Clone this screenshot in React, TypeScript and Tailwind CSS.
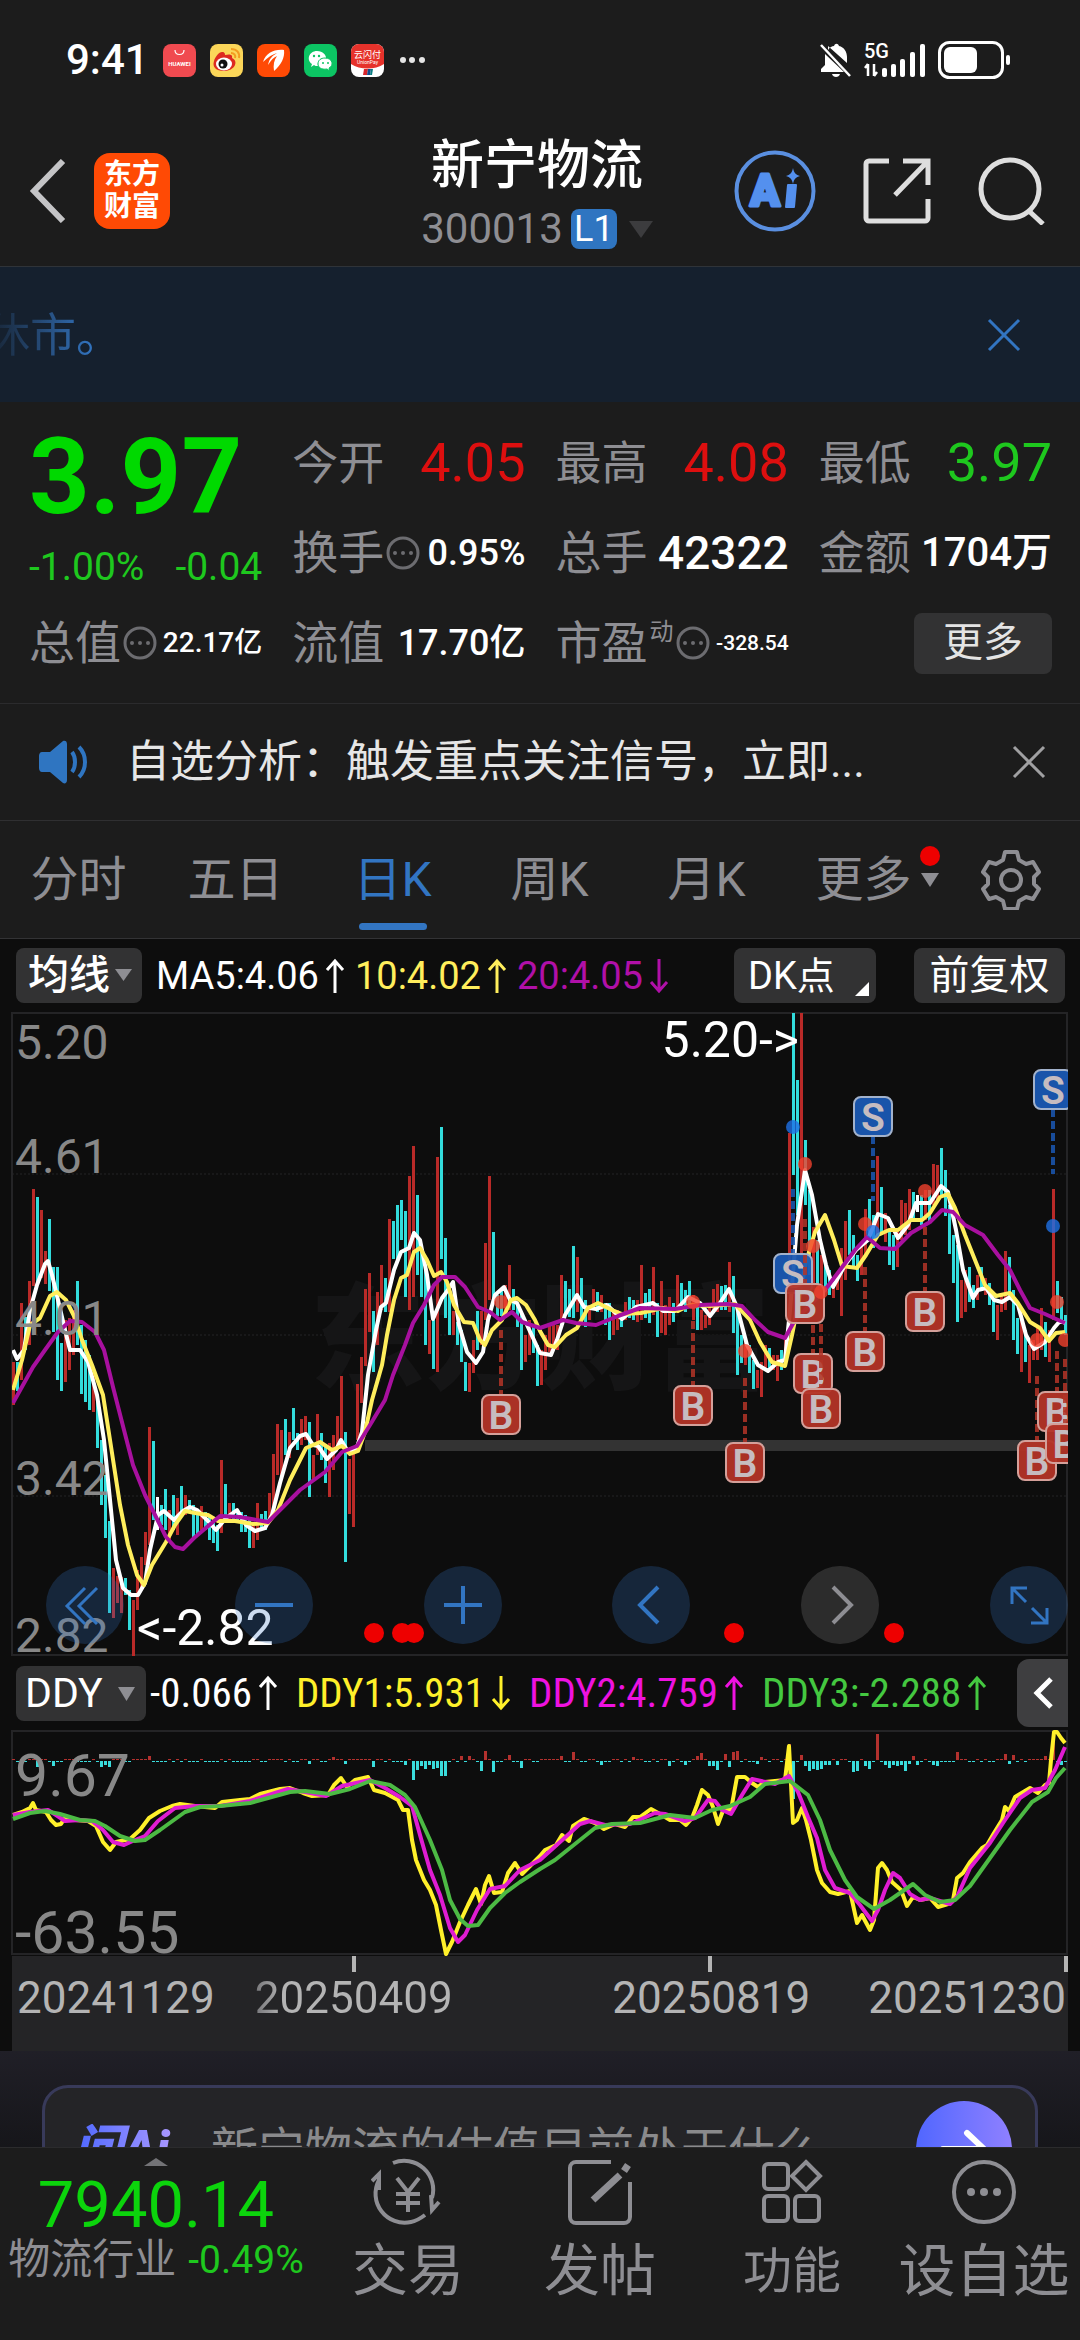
import React, { useState } from "react";

type Point = [number, number];

// One entry per trading day: colour (r = up, c = down, w = flat), high y, low y
const CANDLES = `
r1362-1405 c1362-1391 r1303-1380 c1317-1350 r1281-1345 r1189-1286 c1197-1284 r1210-1278 r1251-1284 c1219-1291
c1267-1332 c1267-1380 c1343-1391 r1320-1382 r1318-1370 r1310-1355 c1281-1345 c1325-1394 c1340-1402 c1355-1410
r1372-1412 c1400-1448 c1440-1505 c1475-1538 c1521-1613 r1568-1618 r1576-1603 r1577-1613 c1578-1595 c1590-1630
r1600-1656 r1570-1610 r1557-1590 r1532-1565 r1427-1545 c1441-1520 w1497-1530 c1505-1525 c1489-1530 r1510-1540
c1495-1530 r1498-1535 c1486-1515 r1495-1515 c1500-1512 c1505-1538 c1510-1535 r1506-1530 c1512-1530 c1515-1540
c1520-1543 c1525-1551 r1460-1533 c1484-1520 r1503-1523 c1503-1520 c1510-1523 c1512-1532 c1515-1532 c1520-1548
r1525-1548 r1503-1540 c1514-1530 c1511-1530 r1493-1522 r1454-1510 r1424-1475 r1430-1478 c1419-1455 r1432-1458
c1408-1440 c1433-1450 r1419-1445 r1416-1440 c1422-1497 r1455-1480 r1414-1455 c1433-1460 c1445-1483 r1443-1497
r1435-1470 r1416-1450 r1376-1440 c1432-1562 r1459-1514 r1450-1527 r1384-1440 r1357-1403 r1289-1366 r1273-1332
c1311-1372 r1292-1345 r1265-1310 c1278-1312 r1219-1312 c1221-1259 c1205-1260 c1200-1240 c1211-1297 r1176-1310
r1146-1297 c1195-1275 c1245-1297 c1270-1345 r1320-1354 c1320-1369 r1157-1372 c1127-1259 c1238-1318 c1290-1335
r1311-1335 c1322-1345 c1330-1362 c1362-1391 r1363-1392 r1340-1373 c1311-1350 r1311-1345 r1243-1320 r1176-1300
c1232-1300 c1295-1316 c1290-1316 r1285-1310 r1265-1310 c1289-1310 c1305-1327 c1312-1370 r1335-1362 r1320-1355
c1325-1353 c1345-1386 r1350-1385 r1335-1370 r1325-1352 r1325-1350 r1325-1350 r1275-1320 c1281-1315 c1289-1317
c1246-1318 r1257-1312 c1278-1325 c1300-1327 r1305-1320 r1289-1310 c1292-1312 r1295-1312 c1303-1325 c1303-1340
r1310-1335 r1310-1330 c1312-1327 r1302-1320 c1297-1318 c1300-1320 r1300-1322 r1265-1320 c1293-1318 c1289-1323
r1267-1315 c1303-1337 r1281-1333 r1305-1335 r1297-1325 c1303-1322 r1275-1310 c1283-1305 c1290-1312 c1281-1305
r1295-1320 c1305-1330 r1310-1330 r1315-1328 r1305-1325 r1289-1310 r1284-1312 c1286-1310 c1285-1310 r1262-1312
c1276-1333 c1310-1375 c1335-1363 r1340-1365 c1345-1373 c1360-1389 r1370-1388 r1362-1397 r1345-1370 c1348-1370
r1355-1370 r1355-1381 c1350-1370 r1340-1362 r1133-1280 c1013-1175 c1080-1215 r1013-1256 c1140-1205 c1190-1275
r1227-1290 c1240-1290 r1255-1300 c1262-1290 c1270-1295 r1285-1298 r1275-1290 r1248-1316 r1221-1280 c1210-1255
c1235-1268 c1255-1281 r1245-1275 r1209-1255 c1199-1240 c1215-1248 r1156-1235 c1187-1235 r1213-1242 c1230-1265
c1235-1270 r1230-1267 r1200-1240 r1203-1235 r1189-1230 c1192-1222 w1195-1212 c1195-1225 r1190-1220 c1190-1222
r1164-1205 r1165-1200 c1148-1195 c1170-1216 c1205-1254 c1235-1283 c1245-1322 r1280-1318 r1270-1312 c1267-1302
c1285-1308 r1275-1300 c1267-1290 r1278-1295 c1283-1305 c1300-1332 r1305-1340 r1295-1312 r1251-1310 c1257-1300
c1290-1340 c1318-1354 r1320-1372 c1330-1362 r1345-1383 r1340-1360 r1325-1360 r1308-1350 c1322-1357 r1330-1362
r1189-1320 c1281-1313 c1297-1320 c1315-1335`
  .trim()
  .split(/\s+/)
  .map((item, i) => {
    const [high, low] = item.slice(1).split("-").map(Number);
    return { x: 13 + i * 4, kind: item[0], high, low };
  });

const MA5 =
  "13,1350 17,1359 24,1350 30,1310 37,1285 45,1264 48,1261 52,1275 58,1300 65,1330 70,1350 80,1350 88,1362 97,1395 104,1440 110,1500 116,1560 123,1588 131,1595 138,1595 145,1583 150,1550 158,1515 164,1511 174,1520 183,1511 190,1507 197,1510 207,1520 216,1530 226,1518 237,1510 246,1525 255,1531 265,1528 272,1515 280,1483 290,1448 300,1436 306,1434 313,1445 318,1446 327,1459 336,1450 341,1440 347,1450 356,1450 362,1432 368,1375 376,1330 381,1307 386,1303 394,1270 401,1252 409,1248 414,1233 420,1240 427,1275 433,1319 442,1298 448,1290 453,1282 459,1325 467,1352 476,1363 483,1352 488,1320 495,1295 504,1287 510,1300 517,1303 527,1325 540,1353 551,1355 557,1340 565,1315 577,1295 584,1307 596,1309 607,1305 622,1319 636,1307 653,1303 663,1311 675,1311 688,1297 700,1303 710,1316 720,1303 729,1289 737,1307 747,1345 758,1365 768,1371 778,1362 785,1360 790,1310 797,1225 805,1170 812,1195 820,1240 826,1265 833,1287 845,1265 856,1250 868,1240 878,1214 888,1218 898,1238 908,1225 916,1203 930,1203 941,1186 948,1192 956,1230 963,1270 973,1298 978,1290 986,1288 994,1300 1002,1302 1010,1297 1018,1305 1026,1335 1034,1349 1045,1342 1054,1328 1060,1321 1065,1323";
const MA10 =
  "13,1390 22,1360 30,1325 40,1318 50,1296 57,1292 66,1300 75,1318 82,1340 92,1365 103,1395 110,1440 120,1505 128,1545 137,1575 144,1585 152,1565 166,1542 175,1525 185,1511 195,1513 208,1515 218,1521 235,1521 253,1524 268,1523 278,1510 290,1480 306,1448 320,1442 332,1450 342,1446 350,1454 358,1451 365,1432 372,1400 382,1365 387,1335 394,1300 401,1278 407,1275 414,1252 420,1248 427,1260 434,1276 441,1272 447,1282 454,1305 464,1322 473,1323 480,1340 485,1345 492,1330 502,1320 511,1300 517,1298 526,1305 535,1320 540,1331 548,1345 555,1347 566,1335 577,1328 588,1308 598,1303 612,1310 622,1314 641,1313 663,1308 678,1311 690,1305 710,1306 735,1304 750,1320 760,1342 772,1362 785,1366 792,1335 799,1300 806,1262 815,1232 825,1215 834,1240 842,1266 857,1268 866,1255 878,1235 889,1230 898,1230 911,1220 922,1220 930,1213 940,1197 948,1194 955,1208 965,1235 975,1260 985,1285 996,1296 1010,1293 1018,1303 1030,1322 1040,1328 1049,1341 1056,1333 1065,1332";
const MA20 =
  "13,1403 23,1385 33,1367 45,1350 58,1332 70,1321 82,1322 95,1332 104,1350 113,1387 124,1430 133,1465 145,1495 155,1515 166,1537 175,1547 183,1549 194,1538 207,1527 220,1516 240,1517 268,1522 282,1508 300,1490 325,1472 342,1452 357,1446 370,1425 385,1400 393,1375 405,1345 413,1323 424,1305 434,1285 442,1277 455,1277 465,1287 478,1307 490,1312 500,1320 512,1312 522,1322 540,1328 563,1320 576,1323 596,1325 618,1316 640,1308 675,1309 700,1305 728,1304 742,1306 755,1320 768,1332 785,1338 795,1320 810,1305 825,1290 840,1270 855,1250 867,1237 880,1248 895,1249 911,1233 930,1222 942,1210 953,1212 965,1225 983,1235 998,1255 1010,1270 1020,1290 1030,1308 1045,1314 1056,1319 1065,1323";

const DDY1 =
  "13,1815 22,1812 30,1808 33,1803 36,1810 46,1812 51,1820 56,1825 61,1824 64,1819 75,1820 88,1821 96,1826 103,1842 110,1850 116,1842 130,1839 140,1830 149,1818 160,1811 172,1806 180,1804 195,1806 215,1808 222,1802 240,1800 250,1799 260,1794 280,1789 290,1788 303,1793 312,1796 328,1795 334,1785 341,1778 347,1787 355,1780 368,1777 374,1790 385,1793 398,1800 403,1810 408,1810 412,1840 416,1860 424,1880 430,1890 436,1905 441,1930 446,1954 452,1942 460,1922 468,1905 476,1889 481,1904 485,1885 489,1876 494,1893 502,1892 508,1873 515,1863 522,1874 530,1866 540,1856 545,1850 556,1845 562,1835 569,1841 573,1826 584,1819 595,1823 604,1829 615,1824 625,1827 633,1817 640,1817 651,1809 660,1814 670,1820 680,1820 686,1825 692,1818 697,1805 702,1790 708,1795 713,1807 718,1824 724,1808 731,1810 737,1777 745,1777 752,1783 758,1787 765,1782 785,1780 789,1746 793,1823 797,1820 802,1808 806,1820 811,1840 817,1870 822,1883 830,1892 838,1894 850,1891 857,1923 862,1915 870,1930 874,1920 878,1868 882,1863 887,1870 892,1882 901,1890 907,1906 913,1897 920,1900 930,1898 938,1907 948,1904 953,1900 957,1878 963,1873 970,1862 982,1848 987,1845 994,1833 1002,1820 1005,1807 1009,1811 1015,1797 1030,1788 1038,1793 1045,1785 1049,1783 1051,1760 1054,1732 1057,1732 1061,1738 1065,1743";
const DDY2 =
  "13,1815 30,1812 48,1810 56,1815 65,1821 80,1820 92,1821 103,1830 113,1842 124,1845 135,1840 145,1836 158,1821 175,1808 195,1806 220,1806 250,1801 275,1793 288,1789 305,1792 326,1796 342,1786 370,1780 385,1788 400,1797 412,1806 420,1835 430,1870 440,1895 450,1928 458,1942 465,1935 477,1910 490,1889 505,1886 520,1870 540,1860 560,1842 580,1824 590,1821 605,1825 630,1824 655,1813 665,1814 685,1821 695,1818 708,1800 715,1801 722,1810 731,1814 742,1795 752,1779 775,1784 789,1776 798,1792 808,1817 817,1838 825,1870 835,1888 850,1893 860,1905 872,1921 878,1910 885,1890 893,1873 900,1878 910,1894 920,1900 930,1898 950,1904 957,1897 970,1868 990,1843 1005,1820 1020,1798 1032,1790 1045,1788 1055,1770 1065,1747";
const DDY3 =
  "13,1819 30,1813 45,1811 60,1814 80,1820 95,1821 105,1826 120,1836 135,1841 145,1840 160,1830 185,1812 200,1807 220,1806 250,1803 290,1792 305,1791 330,1794 350,1789 370,1781 390,1785 405,1795 415,1807 430,1840 442,1870 450,1900 460,1919 468,1926 478,1925 490,1908 505,1893 520,1882 540,1869 555,1860 575,1844 595,1828 612,1824 640,1823 670,1815 695,1818 712,1810 730,1806 750,1797 765,1784 790,1781 808,1795 820,1820 830,1850 845,1880 857,1897 874,1909 890,1900 913,1884 925,1895 940,1902 955,1900 970,1886 985,1865 1010,1830 1032,1802 1048,1792 1056,1778 1065,1768";

// Days whose DDY bar is taller than the flat line, keyed by x
const BARS: Record<number, number> = {
  37: -6, 53: -5, 101: -6, 105: -4, 109: -6, 149: 4, 309: -3, 333: 3, 345: -3, 373: -6, 405: -4, 413: -19, 417: -9,
  421: -5, 425: -8, 429: -4, 433: -8, 437: -7, 441: -15, 445: -15, 461: 4, 469: 4, 481: -10, 485: 9, 493: -11, 509: 5,
  521: -7, 561: 4, 573: 8, 601: -4, 633: 3, 669: -5, 685: -4, 697: 4, 701: 7, 709: -5, 713: -5, 717: -9, 725: 6,
  729: -6, 733: 8, 737: 9, 757: -3, 761: 3, 789: 16, 793: -38, 801: 5, 805: -5, 809: -10, 813: -8, 817: -9, 821: -8,
  825: -4, 829: -4, 837: -4, 853: -11, 857: -10, 865: -5, 869: -8, 877: 26, 885: -4, 889: -7, 893: -4, 897: -5,
  901: -4, 905: -10, 909: -3, 913: 4, 917: -4, 933: -4, 937: -5, 957: 8, 1005: 6, 1009: -3, 1013: 5, 1045: 4,
  1053: 20, 1061: -4,
};

// Buy / sell signals: x, badge centre, dot on the curve, dashed line from / to
const SIGNALS = [
  { type: "B", x: 501, y: 1414, dot: 1302, from: 1330, to: 1394 },
  { type: "B", x: 693, y: 1405, dot: 1302, from: 1321, to: 1385 },
  { type: "B", x: 745, y: 1462, dot: 1351, from: 1378, to: 1442 },
  { type: "S", x: 793, y: 1273, dot: 1127, from: 1189, to: 1253 },
  { type: "B", x: 805, y: 1303, dot: 1164, from: 1219, to: 1283 },
  { type: "B", x: 813, y: 1373, dot: 1246, from: 1325, to: 1353 },
  { type: "B", x: 821, y: 1408, dot: 1292, from: 1324, to: 1388 },
  { type: "B", x: 865, y: 1351, dot: 1224, from: 1267, to: 1331 },
  { type: "S", x: 873, y: 1116, dot: 1232, from: 1136, to: 1201 },
  { type: "B", x: 925, y: 1311, dot: 1191, from: 1227, to: 1291 },
  { type: "B", x: 1037, y: 1460, dot: 1340, from: 1376, to: 1440 },
  { type: "S", x: 1053, y: 1089, dot: 1226, from: 1109, to: 1174 },
  { type: "B", x: 1057, y: 1411, dot: 1302, from: 1351, to: 1391 },
  { type: "B", x: 1065, y: 1443, dot: 1340, from: 1359, to: 1423 },
];

const EVENT_DOTS: Point[] = [
  [374, 1633],
  [402, 1633],
  [414, 1633],
  [734, 1633],
  [894, 1633],
];

const CANDLE_COLORS: Record<string, string> = { r: "#b92a28", c: "#32dcdc", w: "#ffffff" };

const TABS = ["分时", "五日", "日K", "周K", "月K", "更多"];

const Triangle = ({ className }: { className: string }) => (
  <svg viewBox="0 0 18 14" className={className} fill="currentColor" preserveAspectRatio="none">
    <path d="M0 0h18L9 14z" />
  </svg>
);

const Arrow = ({ down = false }: { down?: boolean }) => (
  <svg viewBox="0 0 20 36" className="w-5 h-9 shrink-0" fill="none" stroke="currentColor" strokeWidth="3">
    {down ? <path d="M10 1v32M2 24l8 9 8-9" /> : <path d="M10 35V3M2 12l8-9 8 9" />}
  </svg>
);

const Close = ({ className }: { className: string }) => (
  <svg viewBox="0 0 34 34" className={className} fill="none" stroke="currentColor" strokeWidth="3">
    <path d="M2 2l30 30M32 2L2 32" />
  </svg>
);

const MoreDots = () => (
  <svg viewBox="0 0 34 34" className="w-[34px] h-[34px] shrink-0 text-[#6c6c70]">
    <circle cx="17" cy="17" r="15" fill="none" stroke="currentColor" strokeWidth="3" />
    <g fill="currentColor">
      <circle cx="9" cy="17" r="2" />
      <circle cx="17" cy="17" r="2" />
      <circle cx="25" cy="17" r="2" />
    </g>
  </svg>
);

const StatusBar = () => (
  <div className="h-[120px] flex items-center justify-between pl-[66px] pr-[68px] text-white">
    <div className="flex items-center gap-[14px]">
      <span className="text-[42px] leading-none font-medium">9:41</span>
      <svg viewBox="0 0 33 33" className="w-[33px] h-[33px]">
        <rect width="33" height="33" rx="8" fill="#f04a50" />
        <path d="M12 6c0 6 9 6 9 0" fill="none" stroke="#fff" strokeWidth="1.2" />
        <text x="16.500" y="22" fontSize="6" fontWeight="700" textAnchor="middle" fill="#fff">
          HUAWEI
        </text>
      </svg>
      <svg viewBox="0 0 33 33" className="w-[33px] h-[33px]">
        <rect width="33" height="33" rx="8" fill="#fbd659" />
        <path d="M21 5c6 0 9 4 8 9M21 9c3 0 5 2 4 5" fill="none" stroke="#f39c1f" strokeWidth="2" />
        <path d="M12 8c3 0 3 2 3 3 4-1 8-1 7 3 7 3 3 13-8 13C6 27 2 23 4 17c1-4 5-9 8-9z" fill="#dd2a20" />
        <ellipse cx="14" cy="20" rx="8" ry="6.500" fill="#fff" />
        <circle cx="13" cy="20" r="4.500" fill="#111" />
        <circle cx="12" cy="21" r="1.500" fill="#fff" />
      </svg>
      <svg viewBox="0 0 33 33" className="w-[33px] h-[33px]">
        <rect width="33" height="33" rx="8" fill="#ff4a05" />
        <path d="M27 6C17 5 9 9 6 18c5-5 10-8 14-9-5 3-8 6-9 12 3-5 6-8 9-9-3 4-4 9-3 15 7-6 11-13 10-21z" fill="#fff" />
      </svg>
      <svg viewBox="0 0 33 33" className="w-[33px] h-[33px]">
        <rect width="33" height="33" rx="8" fill="#0cc463" />
        <path d="M13 7c6 0 9 4 9 7-6 0-9 3-8 8-2 0-3 0-4-1l-3 2 1-3c-6-4-3-13 5-13z" fill="#fff" />
        <path d="M21 14c8 0 9 8 4 10l1 3-3-2c-6 1-9-2-9-5 0-4 3-6 7-6z" fill="#fff" stroke="#0cc463" strokeWidth="1" />
        <g fill="#0cc463">
          <circle cx="10" cy="12" r="1.200" />
          <circle cx="15" cy="12" r="1.200" />
          <circle cx="19" cy="19" r="1" />
          <circle cx="24" cy="19" r="1" />
        </g>
      </svg>
      <svg viewBox="0 0 33 33" className="w-[33px] h-[33px]">
        <rect width="33" height="33" rx="8" fill="#fff" />
        <path d="M0 8a8 8 0 018-8h17a8 8 0 018 8v12c-9 6-24 6-33 0z" fill="#e6322b" />
        <text x="16.500" y="14" fontSize="9" textAnchor="middle" fill="#fff">
          云闪付
        </text>
        <text x="16.500" y="20" fontSize="5" textAnchor="middle" fill="#fff">
          UnionPay
        </text>
        <path d="M13 25h4l-1 6h-4z" fill="#d7262b" />
        <path d="M17 25h3l-1 6h-3z" fill="#124f8f" />
        <path d="M20 25h2l-1 6h-2z" fill="#0a7d80" />
      </svg>
      <svg viewBox="0 0 28 8" className="w-7 h-2" fill="#e5e5e5">
        <circle cx="5" cy="4" r="3" />
        <circle cx="14" cy="4" r="3" />
        <circle cx="24" cy="4" r="3" />
      </svg>
    </div>
    <div className="flex items-center gap-3">
      <svg viewBox="0 0 32 36" className="w-8 h-9" fill="#fff">
        <path d="M8 8c2-3 4-4 6-4 1-3 4-3 5 0 5 1 8 6 8 11v6L8 4zM5 12l19 18H1v-3l4-4z" />
        <path d="M12 32h8c-1 4-7 4-8 0z" />
        <path d="M1 3l29 31" stroke="#fff" strokeWidth="2.500" />
      </svg>
      <svg viewBox="0 0 62 38" className="w-[62px] h-[38px]" fill="#fff">
        <text x="0" y="17" fontSize="20" fontWeight="500">
          5G
        </text>
        <path d="M4 23v12M1 27l3-4M10 23v12M10 35l3-4" stroke="#fff" strokeWidth="2.500" fill="none" />
        <rect x="18" y="27" width="5" height="9" rx="2" />
        <rect x="27" y="23" width="5" height="13" rx="2" />
        <rect x="36" y="18" width="5" height="18" rx="2" />
        <rect x="46" y="11" width="5" height="25" rx="2" />
        <rect x="56" y="3" width="5" height="33" rx="2" />
      </svg>
      <svg viewBox="0 0 74 38" className="w-[74px] h-[38px]" fill="none">
        <rect x="1.500" y="1.500" width="63" height="35" rx="10" stroke="#fff" strokeWidth="3" />
        <rect x="6" y="6" width="33" height="26" rx="6" fill="#fff" />
        <rect x="68" y="14" width="4" height="10" rx="2" fill="#fff" />
      </svg>
    </div>
  </div>
);

const Header = () => (
  <header className="h-[147px] grid grid-cols-[1fr_auto_1fr] items-start pl-7 pr-[34px] border-b border-[#2f3338]">
    <div className="flex items-center h-[142px] gap-7">
      <button aria-label="返回">
        <svg viewBox="0 0 38 64" className="w-[38px] h-16" fill="none" stroke="#c4c4c6" strokeWidth="6">
          <path d="M35 2L6 32l29 30" />
        </svg>
      </button>
      <a
        href="#home"
        className="w-[76px] h-[76px] rounded-2xl bg-[#ff4a05] text-white text-[28px] leading-[32px] font-bold flex flex-col items-center justify-center"
      >
        <span>东方</span>
        <span>财富</span>
      </a>
    </div>
    <div className="pt-4 flex flex-col items-center gap-[10px]">
      <h1 className="text-[53px] leading-[60px] text-white font-medium">新宁物流</h1>
      <button className="flex items-center h-[46px] gap-2 text-[#8e8e93] text-[42px] leading-none">
        300013
        <span className="h-10 w-[46px] rounded-lg bg-[#2f75c1] text-white text-[36px] leading-10 text-center">L1</span>
        <Triangle className="w-6 h-[17px] ml-1 text-[#3c3c3e]" />
      </button>
    </div>
    <div className="flex items-center justify-end h-[142px] gap-[47px]">
      <button aria-label="AI" className="w-[82px] h-[82px]">
        <svg viewBox="0 0 82 82" className="w-full h-full">
          <circle cx="41" cy="41" r="38.500" fill="none" stroke="#5a8fe0" strokeWidth="4" />
          <text
            x="16"
            y="56"
            fontSize="44"
            fontWeight="900"
            fill="#5490ee"
            stroke="#5490ee"
            strokeWidth="3"
            strokeLinejoin="round"
          >
            A
          </text>
          <path d="M54 35h8l-2 22h-8z" fill="#5490ee" stroke="#5490ee" strokeWidth="2" strokeLinejoin="round" />
          <path d="M59 18c1 5 3 7 7 8-4 1-6 3-7 8-1-5-3-7-7-8 4-1 6-3 7-8z" fill="#5490ee" />
        </svg>
      </button>
      <button aria-label="分享">
        <svg viewBox="0 0 68 68" className="w-[68px] h-[68px]" fill="none" stroke="#dedede" strokeWidth="5">
          <path d="M26 4H6a3 3 0 00-3 3v54a3 3 0 003 3h56a3 3 0 003-3V42M40 4h25v24M64 5L32 38" />
        </svg>
      </button>
      <button aria-label="搜索">
        <svg viewBox="0 0 68 68" className="w-[68px] h-[68px]" fill="none" stroke="#dedede" strokeWidth="5">
          <circle cx="32" cy="32" r="29" />
          <path d="M51 54l14 13" />
        </svg>
      </button>
    </div>
  </header>
);

interface QuoteItemProps {
  label: string;
  value: string;
  valueClass: string;
  more?: boolean;
  sup?: string;
}

const QuoteItem: React.FC<QuoteItemProps> = ({ label, value, valueClass, more, sup }) => (
  <div className="h-[90px] flex items-center justify-between whitespace-nowrap leading-none">
    <div className="flex items-center gap-[2px]">
      <span className="text-[46px] text-[#8e8e93]">{label}</span>
      {sup && <span className="text-2xl leading-none text-[#8e8e93] self-start">{sup}</span>}
      {more && <MoreDots />}
    </div>
    <span className={valueClass}>{value}</span>
  </div>
);

const Quote = () => (
  <section className="grid grid-cols-4 gap-x-[30px] pl-[29px] pr-7 pt-4 pb-[15px] border-b border-[#2b2b2d]">
    <div className="row-span-2 whitespace-nowrap leading-none">
      <div className="h-[118px] flex items-center text-[106px] font-bold text-[#00d900]">3.97</div>
      <div className="h-[62px] flex items-center justify-between text-[39px] text-[#1ec81e]">
        <span>-1.00%</span>
        <span>-0.04</span>
      </div>
    </div>
    <QuoteItem label="今开" value="4.05" valueClass="text-[54px] text-[#dd0f0f]" />
    <QuoteItem label="最高" value="4.08" valueClass="text-[54px] text-[#dd0f0f]" />
    <QuoteItem label="最低" value="3.97" valueClass="text-[54px] text-[#1ec81e]" />
    <QuoteItem label="换手" value="0.95%" valueClass="text-4xl leading-none font-medium text-white" more />
    <QuoteItem label="总手" value="42322" valueClass="text-[46px] font-medium text-white" />
    <QuoteItem label="金额" value="1704万" valueClass="text-[40px] font-medium text-white" />
    <QuoteItem label="总值" value="22.17亿" valueClass="text-[28px] font-medium text-white" more />
    <QuoteItem label="流值" value="17.70亿" valueClass="text-4xl leading-none font-medium text-white" />
    <QuoteItem label="市盈" value="-328.54" valueClass="text-[21px] font-medium text-white" more sup="动" />
    <div className="flex items-center justify-end">
      <button className="w-[138px] h-[61px] rounded-lg bg-[#323233] text-[#e4e4e4] text-[40px] leading-none">更多</button>
    </div>
  </section>
);

const KLineChart = () => (
  <div className="relative">
    <svg viewBox="0 1012 1080 644" className="block w-full" role="img" aria-label="日K">
      <clipPath id="kline-plot">
        <rect x="12" y="1012" width="1056" height="644" />
      </clipPath>
      <g fill="none" stroke="#242426" strokeWidth="2">
        <path d="M12 1013h1055v642H12z" />
        <path d="M12 1174h1055M12 1335h1055M12 1496h1055" strokeDasharray="2 2" strokeWidth="1" />
      </g>
      <text x="310" y="1380" fontSize="115" fontWeight="900" fill="#151516">
        东方财富
      </text>
      <rect x="365" y="1440" width="703" height="11" fill="#333333" />
      <g clipPath="url(#kline-plot)">
        {CANDLES.map((c) => (
          <rect key={c.x} x={c.x - 1} y={c.high} width="3" height={c.low - c.high} fill={CANDLE_COLORS[c.kind]} />
        ))}
        <g fill="none" strokeWidth="4" strokeLinejoin="round">
          <polyline points={MA5} stroke="#ffffff" />
          <polyline points={MA10} stroke="#ffee5c" />
          <polyline points={MA20} stroke="#a8109f" />
        </g>
        {SIGNALS.map((s) => {
          const color = s.type === "B" ? "#b33427" : "#1a58b3";
          return (
            <g key={s.x}>
              <path d={`M${s.x} ${s.from}V${s.to}`} stroke={color} strokeWidth="4" strokeDasharray="8 4" opacity="0.85" />
              <circle cx={s.x} cy={s.dot} r="7" fill={s.type === "B" ? "#f0412d" : "#1e70e6"} opacity="0.8" />
              <rect
                x={s.x - 19}
                y={s.y - 19}
                width="38"
                height="39"
                rx="7"
                fill={color}
                fillOpacity="0.95"
                stroke={s.type === "B" ? "#d4a09a" : "#a2b2cc"}
                strokeWidth="2"
              />
              <text x={s.x} y={s.y + 15} fontSize="39" fontWeight="600" textAnchor="middle" fill="#c6bcc0">
                {s.type}
              </text>
            </g>
          );
        })}
      </g>
      <g fontSize="48" fill="#888888">
        <text x="15" y="1059">5.20</text>
        <text x="15" y="1173">4.61</text>
        <text x="15" y="1335">4.01</text>
        <text x="15" y="1495">3.42</text>
        <text x="15" y="1652">2.82</text>
      </g>
      <g fontSize="50" fill="#ffffff">
        <text x="799" y="1057" textAnchor="end">5.20-&gt;</text>
        <text x="137" y="1645">&lt;-2.82</text>
      </g>
      {EVENT_DOTS.map(([x, y]) => (
        <circle key={x} cx={x} cy={y} r="10" fill="#ee0000" />
      ))}
    </svg>
    <div className="absolute inset-x-0 bottom-3 pl-[46px] pr-3 flex justify-between text-[#3275c2]">
      <button aria-label="最早" className="w-[78px] h-[78px] rounded-full bg-[#3275c2]/25">
        <svg viewBox="0 0 78 78" fill="none" stroke="currentColor" strokeWidth="3">
          <path d="M39 22L21 40l18 18M51 22L33 40l18 18" />
        </svg>
      </button>
      <button aria-label="缩小" className="w-[78px] h-[78px] rounded-full bg-[#3275c2]/25">
        <svg viewBox="0 0 78 78" fill="none" stroke="currentColor" strokeWidth="4">
          <path d="M20 39h38" />
        </svg>
      </button>
      <button aria-label="放大" className="w-[78px] h-[78px] rounded-full bg-[#3275c2]/25">
        <svg viewBox="0 0 78 78" fill="none" stroke="currentColor" strokeWidth="4">
          <path d="M20 39h38M39 20v38" />
        </svg>
      </button>
      <button aria-label="左移" className="w-[78px] h-[78px] rounded-full bg-[#3275c2]/25">
        <svg viewBox="0 0 78 78" fill="none" stroke="currentColor" strokeWidth="4">
          <path d="M46 21L28 39l18 18" />
        </svg>
      </button>
      <button aria-label="右移" className="w-[78px] h-[78px] rounded-full bg-white/13 text-[#8e8e93]">
        <svg viewBox="0 0 78 78" fill="none" stroke="currentColor" strokeWidth="4">
          <path d="M32 21l18 18-18 18" />
        </svg>
      </button>
      <button aria-label="全屏" className="w-[78px] h-[78px] rounded-full bg-[#3275c2]/25">
        <svg viewBox="0 0 78 78" fill="none" stroke="currentColor" strokeWidth="3">
          <path d="M37 22H22v16M22 22l14 14M41 57h16V42M57 57L42 42" />
        </svg>
      </button>
    </div>
  </div>
);

const DdyChart = () => (
  <svg viewBox="0 1730 1080 226" className="block w-full" role="img" aria-label="DDY">
    <path d="M12 1731h1055v223H12z" fill="none" stroke="#242426" strokeWidth="2" />
    {CANDLES.map((c) => {
      const v = BARS[c.x] ?? (c.kind === "r" ? 1 : -1);
      return (
        <rect
          key={c.x}
          x={c.x - 1}
          y={v > 0 ? 1760 - v : 1761}
          width="3"
          height={Math.abs(v)}
          fill={v > 0 ? "#b3312e" : "#3adcdc"}
        />
      );
    })}
    <g fontSize="59" fill="#888888">
      <text x="15" y="1796">9.67</text>
      <text x="15" y="1953">-63.55</text>
    </g>
    <g fill="none" strokeWidth="4" strokeLinejoin="round">
      <polyline points={DDY1} stroke="#fff02a" />
      <polyline points={DDY2} stroke="#e01cd2" />
      <polyline points={DDY3} stroke="#4cba44" />
    </g>
  </svg>
);

const navItems = [
  {
    label: "交易",
    size: "text-[56px]",
    icon: (
      <>
        <path d="M22 7A29 29 0 0161 42M8 24a29 29 0 0032 42c6-1 10-4 14-7" />
        <path d="M1 25l7-7v16M68 46l-7 8-1-15" />
        <path d="M26 22l11 14 11-14M25 38h24M25 47h24M37 36v20" />
      </>
    ),
  },
  {
    label: "发帖",
    size: "text-[56px]",
    icon: (
      <>
        <path d="M48 6H13a6 6 0 00-6 6v49a6 6 0 006 6h48a6 6 0 006-6V26" />
        <path d="M65 9l-4 6M57 19L30 44" strokeWidth="7" />
      </>
    ),
  },
  {
    label: "功能",
    size: "text-[49px]",
    icon: (
      <>
        <rect x="9" y="8" width="24" height="25" rx="4" />
        <path d="M51 6l14 14-14 14-14-14z" />
        <rect x="9" y="40" width="24" height="25" rx="4" />
        <rect x="40" y="40" width="24" height="25" rx="4" />
      </>
    ),
  },
  {
    label: "设自选",
    size: "text-[57px]",
    icon: (
      <>
        <circle cx="37" cy="36" r="30" />
        <g fill="currentColor" stroke="none">
          <circle cx="24" cy="36" r="4" />
          <circle cx="37" cy="36" r="4" />
          <circle cx="50" cy="36" r="4" />
        </g>
      </>
    ),
  },
];

const BottomNav = () => (
  <nav className="h-[193px] shrink-0 flex bg-[#1c1c1c] border-t border-[#2b2b2d]">
    <button className="w-[312px] shrink-0 pt-[10px] flex flex-col items-center whitespace-nowrap">
      <Triangle className="w-6 h-2 rotate-180 text-[#737376]" />
      <span className="h-[78px] flex items-center text-[65px] leading-none text-[#0cd40c]">7940.14</span>
      <span className="h-8 flex items-center gap-3 text-[42px] leading-none text-[#8e8e93]">
        物流行业
        <span className="text-[39px] text-[#1ec81e]">-0.49%</span>
      </span>
    </button>
    {navItems.map((item) => (
      <button key={item.label} className="flex-1 pt-2 flex flex-col items-center text-[#8e8e93] whitespace-nowrap">
        <svg viewBox="0 0 74 74" className="w-[74px] h-[74px]" fill="none" stroke="currentColor" strokeWidth="4">
          {item.icon}
        </svg>
        <span className={`h-[82px] flex items-center leading-none ${item.size}`}>{item.label}</span>
      </button>
    ))}
  </nav>
);

const App: React.FC = () => {
  const [tab, setTab] = useState("日K");

  return (
    <div className="h-screen flex flex-col overflow-hidden bg-[#1c1c1c] font-['Roboto','Noto_Sans_CJK_SC',sans-serif]">
      <StatusBar />
      <Header />

      <main className="flex-1 min-h-0 overflow-hidden">
        {/* Scrolling market notice */}
        <div className="h-[135px] flex items-center justify-between pr-[59px] bg-[#15202e] text-[#3275c2] overflow-hidden">
          <p className="-ml-4 text-[46px] leading-none bg-linear-to-r from-[#15202e] to-[#3275c2] to-[110px] bg-clip-text text-transparent">
            休市。
          </p>
          <button aria-label="关闭公告">
            <Close className="w-[34px] h-[34px]" />
          </button>
        </div>

        <Quote />

        <div className="h-[117px] flex items-center pl-9 pr-[34px] border-b border-[#2f2f31]">
          <svg viewBox="0 0 54 46" className="w-[54px] h-[46px] text-[#2f75c1]" fill="currentColor">
            <path d="M6 13h8L27 2c2-1 4 0 4 3v36c0 3-2 4-4 3L14 33H6c-2 0-3-2-3-4V17c0-2 1-4 3-4z" />
            <path d="M36 13c4 5 4 15 0 20M43 8c8 8 8 22 0 30" fill="none" stroke="currentColor" strokeWidth="4" />
          </svg>
          <p className="flex-1 pl-9 text-[44px] leading-none text-[#e6e6e6]">自选分析：触发重点关注信号，立即...</p>
          <button aria-label="关闭提示" className="text-[#a0a0a2]">
            <Close className="w-[34px] h-[34px]" />
          </button>
        </div>

        {/* Period tabs */}
        <div className="h-[118px] flex items-center border-b border-[#333335]">
          <div className="flex-1 grid grid-cols-6 h-full">
            {TABS.map((name) => (
              <button
                key={name}
                onClick={() => setTab(name)}
                className={`relative flex items-center justify-center text-[48px] leading-none ${
                  tab === name ? "text-[#3275c2]" : "text-[#8e8e93]"
                }`}
              >
                {name}
                {name === "更多" && (
                  <>
                    <Triangle className="absolute left-[136px] top-[52px] w-[18px] h-[14px]" />
                    <span className="absolute left-[135px] top-[25px] w-5 h-5 rounded-full bg-[#ee0000]" />
                  </>
                )}
                {tab === name && <span className="absolute bottom-2 w-[68px] h-[7px] rounded-full bg-[#3275c2]" />}
              </button>
            ))}
          </div>
          <button aria-label="设置" className="w-[138px] flex justify-center text-[#8e8e93]">
            <svg viewBox="0 0 60 60" className="w-[60px] h-[60px]" fill="none" stroke="currentColor" strokeWidth="4">
              <path
                strokeLinejoin="round"
                d="M24 2h12l2 8 7 4 7-2 6 10-5 5v7l5 5-6 10-7-2-7 4-2 8H24l-2-8-7-4-7 2-6-10 5-5v-7l-5-5 6-10 7 2 7-4z"
              />
              <circle cx="30" cy="30" r="10" />
            </svg>
          </button>
        </div>

        <section className="bg-[#0d0d0d]">
          <div className="h-[73px] flex items-center gap-[14px] pl-4 pr-[15px] text-[38px] leading-none whitespace-nowrap">
            <div className="relative">
              <select
                aria-label="主图指标"
                className="appearance-none w-[126px] h-[55px] pl-3 rounded-lg bg-[#323233] text-white text-[41px] leading-none font-medium"
              >
                <option>均线</option>
              </select>
              <Triangle className="absolute right-[10px] top-[21px] w-[17px] h-3 text-[#8e8e93] pointer-events-none" />
            </div>
            <div className="flex-1 flex items-center gap-[10px]">
              <span className="flex items-center gap-[6px] text-white">
                MA5:4.06 <Arrow />
              </span>
              <span className="flex items-center gap-[6px] text-[#ffee5c]">
                10:4.02 <Arrow />
              </span>
              <span className="flex items-center gap-[6px] text-[#b010a8]">
                20:4.05 <Arrow down />
              </span>
            </div>
            <button className="relative w-[142px] h-[55px] pl-[14px] rounded-lg bg-[#323233] text-white text-left">
              DK点
              <svg viewBox="0 0 14 14" className="absolute right-[7px] bottom-[7px] w-[14px] h-[14px]" fill="#fff">
                <path d="M14 0v14H0z" />
              </svg>
            </button>
            <button className="w-[151px] h-[55px] ml-6 rounded-lg bg-[#323233] text-white text-[40px] leading-none">
              前复权
            </button>
          </div>

          <KLineChart />

          <div className="h-[74px] flex items-center gap-1 pl-4 pr-3 leading-none whitespace-nowrap">
            <div className="relative">
              <select
                aria-label="副图指标"
                className="appearance-none w-[130px] h-[55px] pl-[9px] rounded-lg bg-[#323233] text-white text-[41px] leading-none"
              >
                <option>DDY</option>
              </select>
              <Triangle className="absolute right-[11px] top-[21px] w-[17px] h-[14px] text-[#8e8e93] pointer-events-none" />
            </div>
            <div className="flex-1 flex items-center gap-[18px] text-[41px] font-['Roboto_Condensed','Liberation_Sans_Narrow','Roboto',sans-serif]">
              <span className="flex items-center gap-[6px] text-white">
                -0.066 <Arrow />
              </span>
              <span className="flex items-center gap-[6px] text-[#fff02a]">
                DDY1:5.931 <Arrow down />
              </span>
              <span className="flex items-center gap-[6px] text-[#ee12e0]">
                DDY2:4.759 <Arrow />
              </span>
              <span className="flex items-center gap-[6px] text-[#44c840]">
                DDY3:-2.288 <Arrow />
              </span>
            </div>
            <button aria-label="展开" className="w-[51px] h-[68px] rounded-l-xl bg-[#3e3e40] flex items-center justify-center">
              <svg viewBox="0 0 20 32" className="w-5 h-8" fill="none" stroke="#fff" strokeWidth="5">
                <path d="M18 2L4 16l14 14" />
              </svg>
            </button>
          </div>

          <DdyChart />

          <div className="relative h-[95px] mx-3 pt-[18px] bg-[#242426] text-[44px] leading-[48px] text-[#b4b4b4]">
            <svg viewBox="0 0 1056 16" className="absolute inset-x-0 top-0 w-full" fill="#b4b4b4">
              <path d="M340 0h4v16h-4zM696 0h4v16h-4zM1052 0h4v16h-4z" />
            </svg>
            <div className="flex pl-[5px] pr-[2px]">
              <span>20241129</span>
              <span className="ml-[40px] flex-1 bg-linear-to-r from-[#77777a] from-0% to-[#b4b4b4] to-[28px] bg-clip-text text-transparent">
                20250409
              </span>
              <span className="mr-[58px]">20250819</span>
              <span>20251230</span>
            </div>
          </div>
        </section>

        {/* AI question box */}
        <section className="px-[42px] pt-[34px] bg-linear-to-b from-[#201f27] to-[#16161a] to-[96px]">
          <div className="h-[128px] flex items-center pl-7 pr-[23px] rounded-[26px] border-3 border-[#383a5a] bg-[#242427]">
            <span className="w-[138px] text-[50px] leading-none font-black italic bg-linear-to-r from-[#4c66ff] to-[#b49cff] to-[110px] bg-clip-text text-transparent">
              问Ai
            </span>
            <span className="flex-1 text-[47px] leading-none text-[#8a8a8c]">新宁物流的估值目前处于什么</span>
            <button
              aria-label="提问"
              className="w-24 h-24 rounded-full bg-linear-to-r from-[#5066ff] to-[#8f80ff] flex items-center justify-center"
            >
              <svg viewBox="0 0 48 40" className="w-12 h-10" fill="none" stroke="#fff" strokeWidth="6" strokeLinecap="round">
                <path d="M3 20h40M27 4l17 16-17 16" />
              </svg>
            </button>
          </div>
        </section>
      </main>

      <BottomNav />
    </div>
  );
};

export default App;
